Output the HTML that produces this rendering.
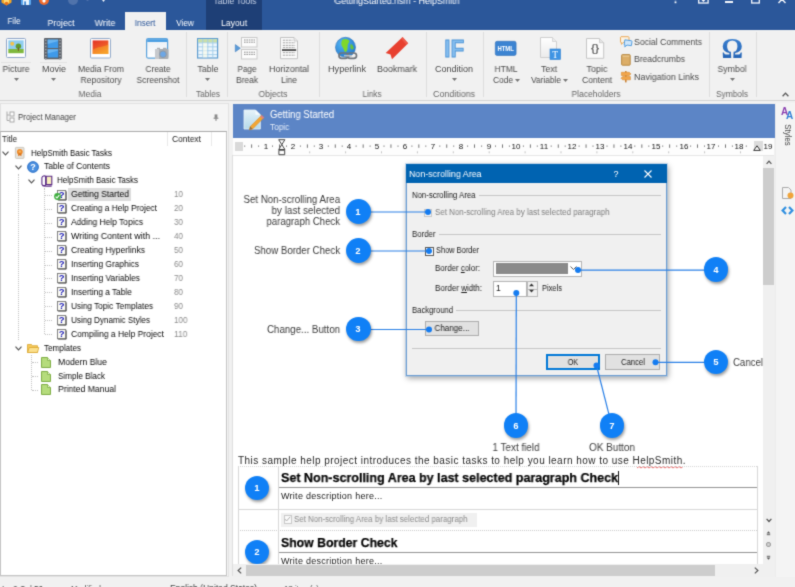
<!DOCTYPE html>
<html><head><meta charset="utf-8"><title>HelpSmith</title>
<style>
html,body{margin:0;padding:0;}
body{width:795px;height:587px;overflow:hidden;position:relative;background:#f1f1f1;font-family:"Liberation Sans",sans-serif;}
.t{position:absolute;white-space:nowrap;display:block;will-change:transform;}
svg{position:absolute;overflow:visible;}
#wrap{position:absolute;left:0;top:0;width:795px;height:587px;overflow:hidden;background:#f1f1f1;filter:url(#bl);}
</style></head><body><svg width="0" height="0" style="position:absolute"><filter id="bl" x="0" y="0" width="100%" height="100%" color-interpolation-filters="sRGB"><feConvolveMatrix order="3" kernelMatrix="0.025 0.095 0.025 0.095 0.52 0.095 0.025 0.095 0.025" edgeMode="duplicate" preserveAlpha="true"/></filter></svg><div id="wrap">
<div style="position:absolute;left:0px;top:0px;width:795px;height:30px;background:#2b579a;"></div><div style="position:absolute;left:206px;top:0px;width:56px;height:30px;background:#1e3f76;"></div><div style="position:absolute;left:125px;top:12px;width:41px;height:19px;background:#f1f1f1;"></div><span class="t" style="left:235px;transform-origin:50% 50%;top:-4.5px;line-height:11px;font-size:9px;color:#c9d4e8;font-weight:normal;font-family:'Liberation Sans', sans-serif;transform:translateX(-50%) scaleX(0.9582);">Table Tools</span><span class="t" style="left:396.5px;transform-origin:50% 50%;top:-4.5px;line-height:11px;font-size:9px;color:#ffffff;font-weight:normal;font-family:'Liberation Sans', sans-serif;transform:translateX(-50%) scaleX(0.9838);">GettingStarted.hsm - HelpSmith</span><span class="t" style="left:14.2px;transform-origin:50% 50%;top:15.45px;line-height:11.5px;font-size:9.5px;color:#fff;font-weight:normal;font-family:'Liberation Sans', sans-serif;transform:translateX(-50%) scaleX(0.8490);">File</span><span class="t" style="left:60.8px;transform-origin:50% 50%;top:16.85px;line-height:11.5px;font-size:9.5px;color:#fff;font-weight:normal;font-family:'Liberation Sans', sans-serif;transform:translateX(-50%) scaleX(0.9128);">Project</span><span class="t" style="left:104.7px;transform-origin:50% 50%;top:16.85px;line-height:11.5px;font-size:9.5px;color:#fff;font-weight:normal;font-family:'Liberation Sans', sans-serif;transform:translateX(-50%) scaleX(0.9409);">Write</span><span class="t" style="left:145.3px;transform-origin:50% 50%;top:16.85px;line-height:11.5px;font-size:9.5px;color:#2b579a;font-weight:normal;font-family:'Liberation Sans', sans-serif;transform:translateX(-50%) scaleX(0.8710);">Insert</span><span class="t" style="left:184.5px;transform-origin:50% 50%;top:16.85px;line-height:11.5px;font-size:9.5px;color:#fff;font-weight:normal;font-family:'Liberation Sans', sans-serif;transform:translateX(-50%) scaleX(0.8667);">View</span><span class="t" style="left:233.7px;transform-origin:50% 50%;top:16.85px;line-height:11.5px;font-size:9.5px;color:#fff;font-weight:normal;font-family:'Liberation Sans', sans-serif;transform:translateX(-50%) scaleX(0.9113);">Layout</span><div style="position:absolute;left:0px;top:30px;width:795px;height:71px;background:#f1f1f1;border-bottom:1px solid #d4d4d4;box-sizing:border-box;"></div><div style="position:absolute;left:186px;top:32px;width:1px;height:64.5px;background:#dddddd;"></div><div style="position:absolute;left:227px;top:32px;width:1px;height:64.5px;background:#dddddd;"></div><div style="position:absolute;left:318.5px;top:32px;width:1px;height:64.5px;background:#dddddd;"></div><div style="position:absolute;left:425.5px;top:32px;width:1px;height:64.5px;background:#dddddd;"></div><div style="position:absolute;left:482.5px;top:32px;width:1px;height:64.5px;background:#dddddd;"></div><div style="position:absolute;left:708.5px;top:32px;width:1px;height:64.5px;background:#dddddd;"></div><div style="position:absolute;left:756px;top:32px;width:1px;height:64.5px;background:#dddddd;"></div><span class="t" style="left:16px;transform-origin:50% 50%;top:64px;line-height:11px;font-size:9px;color:#4a4a4a;font-weight:normal;font-family:'Liberation Sans', sans-serif;transform:translateX(-50%) scaleX(0.9637);">Picture</span><svg style="left:13.5px;top:78px" width="5" height="3"><path d="M0 0h5L2.5 3z" fill="#777"/></svg><span class="t" style="left:53.5px;transform-origin:50% 50%;top:64px;line-height:11px;font-size:9px;color:#4a4a4a;font-weight:normal;font-family:'Liberation Sans', sans-serif;transform:translateX(-50%) scaleX(0.9993);">Movie</span><svg style="left:51px;top:78px" width="5" height="3"><path d="M0 0h5L2.5 3z" fill="#777"/></svg><span class="t" style="left:100.5px;transform-origin:50% 50%;top:64px;line-height:11px;font-size:9px;color:#4a4a4a;font-weight:normal;font-family:'Liberation Sans', sans-serif;transform:translateX(-50%) scaleX(0.9580);">Media From</span><span class="t" style="left:100.5px;transform-origin:50% 50%;top:75px;line-height:11px;font-size:9px;color:#4a4a4a;font-weight:normal;font-family:'Liberation Sans', sans-serif;transform:translateX(-50%) scaleX(0.9528);">Repository</span><span class="t" style="left:157.5px;transform-origin:50% 50%;top:64px;line-height:11px;font-size:9px;color:#4a4a4a;font-weight:normal;font-family:'Liberation Sans', sans-serif;transform:translateX(-50%) scaleX(0.9254);">Create</span><span class="t" style="left:157.5px;transform-origin:50% 50%;top:75px;line-height:11px;font-size:9px;color:#4a4a4a;font-weight:normal;font-family:'Liberation Sans', sans-serif;transform:translateX(-50%) scaleX(0.9444);">Screenshot</span><span class="t" style="left:90px;transform-origin:50% 50%;top:88.5px;line-height:11px;font-size:9px;color:#666;font-weight:normal;font-family:'Liberation Sans', sans-serif;transform:translateX(-50%) scaleX(0.9382);">Media</span><span class="t" style="left:207.5px;transform-origin:50% 50%;top:64px;line-height:11px;font-size:9px;color:#4a4a4a;font-weight:normal;font-family:'Liberation Sans', sans-serif;transform:translateX(-50%) scaleX(0.9760);">Table</span><svg style="left:205px;top:78px" width="5" height="3"><path d="M0 0h5L2.5 3z" fill="#777"/></svg><span class="t" style="left:207.5px;transform-origin:50% 50%;top:88.5px;line-height:11px;font-size:9px;color:#666;font-weight:normal;font-family:'Liberation Sans', sans-serif;transform:translateX(-50%) scaleX(0.9225);">Tables</span><span class="t" style="left:246.5px;transform-origin:50% 50%;top:64px;line-height:11px;font-size:9px;color:#4a4a4a;font-weight:normal;font-family:'Liberation Sans', sans-serif;transform:translateX(-50%) scaleX(0.9034);">Page</span><span class="t" style="left:246.5px;transform-origin:50% 50%;top:75px;line-height:11px;font-size:9px;color:#4a4a4a;font-weight:normal;font-family:'Liberation Sans', sans-serif;transform:translateX(-50%) scaleX(0.9355);">Break</span><span class="t" style="left:289px;transform-origin:50% 50%;top:64px;line-height:11px;font-size:9px;color:#4a4a4a;font-weight:normal;font-family:'Liberation Sans', sans-serif;transform:translateX(-50%) scaleX(0.9869);">Horizontal</span><span class="t" style="left:289px;transform-origin:50% 50%;top:75px;line-height:11px;font-size:9px;color:#4a4a4a;font-weight:normal;font-family:'Liberation Sans', sans-serif;transform:translateX(-50%) scaleX(0.9403);">Line</span><span class="t" style="left:272.5px;transform-origin:50% 50%;top:88.5px;line-height:11px;font-size:9px;color:#666;font-weight:normal;font-family:'Liberation Sans', sans-serif;transform:translateX(-50%) scaleX(0.9503);">Objects</span><span class="t" style="left:346.5px;transform-origin:50% 50%;top:64px;line-height:11px;font-size:9px;color:#4a4a4a;font-weight:normal;font-family:'Liberation Sans', sans-serif;transform:translateX(-50%) scaleX(1.0129);">Hyperlink</span><span class="t" style="left:397px;transform-origin:50% 50%;top:64px;line-height:11px;font-size:9px;color:#4a4a4a;font-weight:normal;font-family:'Liberation Sans', sans-serif;transform:translateX(-50%) scaleX(0.9873);">Bookmark</span><span class="t" style="left:372px;transform-origin:50% 50%;top:88.5px;line-height:11px;font-size:9px;color:#666;font-weight:normal;font-family:'Liberation Sans', sans-serif;transform:translateX(-50%) scaleX(0.9041);">Links</span><span class="t" style="left:454px;transform-origin:50% 50%;top:64px;line-height:11px;font-size:9px;color:#4a4a4a;font-weight:normal;font-family:'Liberation Sans', sans-serif;transform:translateX(-50%) scaleX(0.9992);">Condition</span><svg style="left:451.5px;top:78px" width="5" height="3"><path d="M0 0h5L2.5 3z" fill="#777"/></svg><span class="t" style="left:454px;transform-origin:50% 50%;top:88.5px;line-height:11px;font-size:9px;color:#666;font-weight:normal;font-family:'Liberation Sans', sans-serif;transform:translateX(-50%) scaleX(0.9875);">Conditions</span><span class="t" style="left:505.5px;transform-origin:50% 50%;top:64px;line-height:11px;font-size:9px;color:#4a4a4a;font-weight:normal;font-family:'Liberation Sans', sans-serif;transform:translateX(-50%) scaleX(0.9388);">HTML</span><span class="t" style="left:502.7px;transform-origin:50% 50%;top:75px;line-height:11px;font-size:9px;color:#4a4a4a;font-weight:normal;font-family:'Liberation Sans', sans-serif;transform:translateX(-50%) scaleX(0.9296);">Code</span><span class="t" style="left:549px;transform-origin:50% 50%;top:64px;line-height:11px;font-size:9px;color:#4a4a4a;font-weight:normal;font-family:'Liberation Sans', sans-serif;transform:translateX(-50%) scaleX(0.9688);">Text</span><span class="t" style="left:546.4px;transform-origin:50% 50%;top:75px;line-height:11px;font-size:9px;color:#4a4a4a;font-weight:normal;font-family:'Liberation Sans', sans-serif;transform:translateX(-50%) scaleX(0.9271);">Variable</span><span class="t" style="left:596.5px;transform-origin:50% 50%;top:64px;line-height:11px;font-size:9px;color:#4a4a4a;font-weight:normal;font-family:'Liberation Sans', sans-serif;transform:translateX(-50%) scaleX(0.9993);">Topic</span><span class="t" style="left:596.5px;transform-origin:50% 50%;top:75px;line-height:11px;font-size:9px;color:#4a4a4a;font-weight:normal;font-family:'Liberation Sans', sans-serif;transform:translateX(-50%) scaleX(0.9514);">Content</span><span class="t" style="left:595.5px;transform-origin:50% 50%;top:88.5px;line-height:11px;font-size:9px;color:#666;font-weight:normal;font-family:'Liberation Sans', sans-serif;transform:translateX(-50%) scaleX(0.9417);">Placeholders</span><span class="t" style="left:732px;transform-origin:50% 50%;top:64px;line-height:11px;font-size:9px;color:#4a4a4a;font-weight:normal;font-family:'Liberation Sans', sans-serif;transform:translateX(-50%) scaleX(0.9662);">Symbol</span><svg style="left:729.5px;top:78px" width="5" height="3"><path d="M0 0h5L2.5 3z" fill="#777"/></svg><span class="t" style="left:732px;transform-origin:50% 50%;top:88.5px;line-height:11px;font-size:9px;color:#666;font-weight:normal;font-family:'Liberation Sans', sans-serif;transform:translateX(-50%) scaleX(0.9271);">Symbols</span><span class="t" style="left:634px;transform-origin:0 50%;top:36.5px;line-height:11px;font-size:9px;color:#4a4a4a;font-weight:normal;font-family:'Liberation Sans', sans-serif;transform:scaleX(0.9641);">Social Comments</span><span class="t" style="left:634px;transform-origin:0 50%;top:54px;line-height:11px;font-size:9px;color:#4a4a4a;font-weight:normal;font-family:'Liberation Sans', sans-serif;transform:scaleX(0.9527);">Breadcrumbs</span><span class="t" style="left:634px;transform-origin:0 50%;top:72px;line-height:11px;font-size:9px;color:#4a4a4a;font-weight:normal;font-family:'Liberation Sans', sans-serif;transform:scaleX(0.9841);">Navigation Links</span><div style="position:absolute;left:0px;top:103px;width:229px;height:474px;background:#f5f5f5;border:1px solid #e2e2e2;box-sizing:border-box;"></div><span class="t" style="left:17.5px;transform-origin:0 50%;top:111.5px;line-height:11px;font-size:9px;color:#444;font-weight:normal;font-family:'Liberation Sans', sans-serif;transform:scaleX(0.8782);">Project Manager</span><div style="position:absolute;left:0px;top:131px;width:227px;height:445px;background:#fff;border:1px solid #c4c4c4;border-top-color:#ababab;box-sizing:border-box;"></div><div style="position:absolute;left:167px;top:132px;width:1px;height:14px;background:#e9e9e9;"></div><div style="position:absolute;left:211px;top:132px;width:1px;height:14px;background:#e9e9e9;"></div><span class="t" style="left:2px;transform-origin:0 50%;top:133.5px;line-height:11px;font-size:9px;color:#222;font-weight:normal;font-family:'Liberation Sans', sans-serif;transform:scaleX(0.8997);">Title</span><span class="t" style="left:172px;transform-origin:0 50%;top:133.5px;line-height:11px;font-size:9px;color:#222;font-weight:normal;font-family:'Liberation Sans', sans-serif;transform:scaleX(0.9345);">Context</span><div style="position:absolute;left:233px;top:104px;width:542px;height:34px;background:#5c85c6;"></div><span class="t" style="left:270px;transform-origin:0 50%;top:108.5px;line-height:12px;font-size:10px;color:#fff;font-weight:normal;font-family:'Liberation Sans', sans-serif;transform:scaleX(0.9515);">Getting Started</span><span class="t" style="left:270px;transform-origin:0 50%;top:121.95px;line-height:10.5px;font-size:8.5px;color:#e4ecf8;font-weight:normal;font-family:'Liberation Sans', sans-serif;transform:scaleX(0.9726);">Topic</span><div style="position:absolute;left:233px;top:138px;width:541px;height:17px;background:#f3f3f3;"></div><div style="position:absolute;left:233px;top:155px;width:531px;height:407px;background:#fff;"></div><div style="position:absolute;left:18px;top:174px;width:0px;height:166px;border-left:1px dotted #c2c2c2;"></div><div style="position:absolute;left:44px;top:188px;width:0px;height:146.22px;border-left:1px dotted #c2c2c2;"></div><div style="position:absolute;left:31px;top:355px;width:0px;height:34.98px;border-left:1px dotted #c2c2c2;"></div><div style="position:absolute;left:45px;top:194.82px;width:7px;height:0px;border-top:1px dotted #c2c2c2;"></div><div style="position:absolute;left:45px;top:208.76px;width:7px;height:0px;border-top:1px dotted #c2c2c2;"></div><div style="position:absolute;left:45px;top:222.7px;width:7px;height:0px;border-top:1px dotted #c2c2c2;"></div><div style="position:absolute;left:45px;top:236.64px;width:7px;height:0px;border-top:1px dotted #c2c2c2;"></div><div style="position:absolute;left:45px;top:250.58px;width:7px;height:0px;border-top:1px dotted #c2c2c2;"></div><div style="position:absolute;left:45px;top:264.52px;width:7px;height:0px;border-top:1px dotted #c2c2c2;"></div><div style="position:absolute;left:45px;top:278.46px;width:7px;height:0px;border-top:1px dotted #c2c2c2;"></div><div style="position:absolute;left:45px;top:292.4px;width:7px;height:0px;border-top:1px dotted #c2c2c2;"></div><div style="position:absolute;left:45px;top:306.34px;width:7px;height:0px;border-top:1px dotted #c2c2c2;"></div><div style="position:absolute;left:45px;top:320.28px;width:7px;height:0px;border-top:1px dotted #c2c2c2;"></div><div style="position:absolute;left:45px;top:334.22px;width:7px;height:0px;border-top:1px dotted #c2c2c2;"></div><div style="position:absolute;left:32px;top:362.1px;width:6px;height:0px;border-top:1px dotted #c2c2c2;"></div><div style="position:absolute;left:32px;top:376.04px;width:6px;height:0px;border-top:1px dotted #c2c2c2;"></div><div style="position:absolute;left:32px;top:389.98px;width:6px;height:0px;border-top:1px dotted #c2c2c2;"></div><div style="position:absolute;left:67.5px;top:187.5px;width:63.5px;height:13.5px;background:#dcdcdc;"></div><svg style="left:1.5px;top:150.8px" width="7" height="5"><path d="M0.5 0.7L3.5 3.8L6.5 0.7" fill="none" stroke="#555" stroke-width="1.2"/></svg><svg style="left:15px;top:164.74px" width="7" height="5"><path d="M0.5 0.7L3.5 3.8L6.5 0.7" fill="none" stroke="#555" stroke-width="1.2"/></svg><svg style="left:28px;top:178.68px" width="7" height="5"><path d="M0.5 0.7L3.5 3.8L6.5 0.7" fill="none" stroke="#555" stroke-width="1.2"/></svg><svg style="left:15px;top:345.96px" width="7" height="5"><path d="M0.5 0.7L3.5 3.8L6.5 0.7" fill="none" stroke="#555" stroke-width="1.2"/></svg><span class="t" style="left:30.5px;transform-origin:0 50%;top:147.5px;line-height:11px;font-size:9px;color:#0a0a0a;font-weight:normal;font-family:'Liberation Sans', sans-serif;transform:scaleX(0.8865);">HelpSmith Basic Tasks</span><span class="t" style="left:43.5px;transform-origin:0 50%;top:161.44px;line-height:11px;font-size:9px;color:#0a0a0a;font-weight:normal;font-family:'Liberation Sans', sans-serif;transform:scaleX(0.9422);">Table of Contents</span><span class="t" style="left:57px;transform-origin:0 50%;top:175.38px;line-height:11px;font-size:9px;color:#0a0a0a;font-weight:normal;font-family:'Liberation Sans', sans-serif;transform:scaleX(0.8865);">HelpSmith Basic Tasks</span><svg style="left:56.5px;top:189.52px" width="10" height="11" viewBox="0 0 10 11"><rect x="0.5" y="0.5" width="8.2" height="9.2" fill="#fdfdf6" stroke="#777" stroke-width="0.9"/><path d="M1.2 10.1H9.2V1.4" stroke="#444" stroke-width="0.9" fill="none"/><text x="4.6" y="8.3" font-size="9.5" font-weight="bold" font-family="Liberation Sans,sans-serif" fill="#2020b8" text-anchor="middle">?</text></svg><span class="t" style="left:70.5px;transform-origin:0 50%;top:189.32px;line-height:11px;font-size:9px;color:#0a0a0a;font-weight:normal;font-family:'Liberation Sans', sans-serif;transform:scaleX(0.9579);">Getting Started</span><span class="t" style="left:173.5px;transform-origin:0 50%;top:189.32px;line-height:11px;font-size:9px;color:#8a8a8a;font-weight:normal;font-family:'Liberation Sans', sans-serif;transform:scaleX(0.8986);">10</span><svg style="left:56.5px;top:203.46px" width="10" height="11" viewBox="0 0 10 11"><rect x="0.5" y="0.5" width="8.2" height="9.2" fill="#fdfdf6" stroke="#777" stroke-width="0.9"/><path d="M1.2 10.1H9.2V1.4" stroke="#444" stroke-width="0.9" fill="none"/><text x="4.6" y="8.3" font-size="9.5" font-weight="bold" font-family="Liberation Sans,sans-serif" fill="#2020b8" text-anchor="middle">?</text></svg><span class="t" style="left:70.5px;transform-origin:0 50%;top:203.26px;line-height:11px;font-size:9px;color:#0a0a0a;font-weight:normal;font-family:'Liberation Sans', sans-serif;transform:scaleX(0.9243);">Creating a Help Project</span><span class="t" style="left:173.5px;transform-origin:0 50%;top:203.26px;line-height:11px;font-size:9px;color:#8a8a8a;font-weight:normal;font-family:'Liberation Sans', sans-serif;transform:scaleX(0.8986);">20</span><svg style="left:56.5px;top:217.4px" width="10" height="11" viewBox="0 0 10 11"><rect x="0.5" y="0.5" width="8.2" height="9.2" fill="#fdfdf6" stroke="#777" stroke-width="0.9"/><path d="M1.2 10.1H9.2V1.4" stroke="#444" stroke-width="0.9" fill="none"/><text x="4.6" y="8.3" font-size="9.5" font-weight="bold" font-family="Liberation Sans,sans-serif" fill="#2020b8" text-anchor="middle">?</text></svg><span class="t" style="left:70.5px;transform-origin:0 50%;top:217.2px;line-height:11px;font-size:9px;color:#0a0a0a;font-weight:normal;font-family:'Liberation Sans', sans-serif;transform:scaleX(0.9364);">Adding Help Topics</span><span class="t" style="left:173.5px;transform-origin:0 50%;top:217.2px;line-height:11px;font-size:9px;color:#8a8a8a;font-weight:normal;font-family:'Liberation Sans', sans-serif;transform:scaleX(0.8986);">30</span><svg style="left:56.5px;top:231.34px" width="10" height="11" viewBox="0 0 10 11"><rect x="0.5" y="0.5" width="8.2" height="9.2" fill="#fdfdf6" stroke="#777" stroke-width="0.9"/><path d="M1.2 10.1H9.2V1.4" stroke="#444" stroke-width="0.9" fill="none"/><text x="4.6" y="8.3" font-size="9.5" font-weight="bold" font-family="Liberation Sans,sans-serif" fill="#2020b8" text-anchor="middle">?</text></svg><span class="t" style="left:70.5px;transform-origin:0 50%;top:231.14px;line-height:11px;font-size:9px;color:#0a0a0a;font-weight:normal;font-family:'Liberation Sans', sans-serif;transform:scaleX(0.9848);">Writing Content with ...</span><span class="t" style="left:173.5px;transform-origin:0 50%;top:231.14px;line-height:11px;font-size:9px;color:#8a8a8a;font-weight:normal;font-family:'Liberation Sans', sans-serif;transform:scaleX(0.8986);">40</span><svg style="left:56.5px;top:245.28px" width="10" height="11" viewBox="0 0 10 11"><rect x="0.5" y="0.5" width="8.2" height="9.2" fill="#fdfdf6" stroke="#777" stroke-width="0.9"/><path d="M1.2 10.1H9.2V1.4" stroke="#444" stroke-width="0.9" fill="none"/><text x="4.6" y="8.3" font-size="9.5" font-weight="bold" font-family="Liberation Sans,sans-serif" fill="#2020b8" text-anchor="middle">?</text></svg><span class="t" style="left:70.5px;transform-origin:0 50%;top:245.08px;line-height:11px;font-size:9px;color:#0a0a0a;font-weight:normal;font-family:'Liberation Sans', sans-serif;transform:scaleX(0.9423);">Creating Hyperlinks</span><span class="t" style="left:173.5px;transform-origin:0 50%;top:245.08px;line-height:11px;font-size:9px;color:#8a8a8a;font-weight:normal;font-family:'Liberation Sans', sans-serif;transform:scaleX(0.8986);">50</span><svg style="left:56.5px;top:259.22px" width="10" height="11" viewBox="0 0 10 11"><rect x="0.5" y="0.5" width="8.2" height="9.2" fill="#fdfdf6" stroke="#777" stroke-width="0.9"/><path d="M1.2 10.1H9.2V1.4" stroke="#444" stroke-width="0.9" fill="none"/><text x="4.6" y="8.3" font-size="9.5" font-weight="bold" font-family="Liberation Sans,sans-serif" fill="#2020b8" text-anchor="middle">?</text></svg><span class="t" style="left:70.5px;transform-origin:0 50%;top:259.02px;line-height:11px;font-size:9px;color:#0a0a0a;font-weight:normal;font-family:'Liberation Sans', sans-serif;transform:scaleX(0.9309);">Inserting Graphics</span><span class="t" style="left:173.5px;transform-origin:0 50%;top:259.02px;line-height:11px;font-size:9px;color:#8a8a8a;font-weight:normal;font-family:'Liberation Sans', sans-serif;transform:scaleX(0.8986);">60</span><svg style="left:56.5px;top:273.16px" width="10" height="11" viewBox="0 0 10 11"><rect x="0.5" y="0.5" width="8.2" height="9.2" fill="#fdfdf6" stroke="#777" stroke-width="0.9"/><path d="M1.2 10.1H9.2V1.4" stroke="#444" stroke-width="0.9" fill="none"/><text x="4.6" y="8.3" font-size="9.5" font-weight="bold" font-family="Liberation Sans,sans-serif" fill="#2020b8" text-anchor="middle">?</text></svg><span class="t" style="left:70.5px;transform-origin:0 50%;top:272.96px;line-height:11px;font-size:9px;color:#0a0a0a;font-weight:normal;font-family:'Liberation Sans', sans-serif;transform:scaleX(0.9340);">Inserting Variables</span><span class="t" style="left:173.5px;transform-origin:0 50%;top:272.96px;line-height:11px;font-size:9px;color:#8a8a8a;font-weight:normal;font-family:'Liberation Sans', sans-serif;transform:scaleX(0.8986);">70</span><svg style="left:56.5px;top:287.1px" width="10" height="11" viewBox="0 0 10 11"><rect x="0.5" y="0.5" width="8.2" height="9.2" fill="#fdfdf6" stroke="#777" stroke-width="0.9"/><path d="M1.2 10.1H9.2V1.4" stroke="#444" stroke-width="0.9" fill="none"/><text x="4.6" y="8.3" font-size="9.5" font-weight="bold" font-family="Liberation Sans,sans-serif" fill="#2020b8" text-anchor="middle">?</text></svg><span class="t" style="left:70.5px;transform-origin:0 50%;top:286.9px;line-height:11px;font-size:9px;color:#0a0a0a;font-weight:normal;font-family:'Liberation Sans', sans-serif;transform:scaleX(0.9258);">Inserting a Table</span><span class="t" style="left:173.5px;transform-origin:0 50%;top:286.9px;line-height:11px;font-size:9px;color:#8a8a8a;font-weight:normal;font-family:'Liberation Sans', sans-serif;transform:scaleX(0.8986);">80</span><svg style="left:56.5px;top:301.04px" width="10" height="11" viewBox="0 0 10 11"><rect x="0.5" y="0.5" width="8.2" height="9.2" fill="#fdfdf6" stroke="#777" stroke-width="0.9"/><path d="M1.2 10.1H9.2V1.4" stroke="#444" stroke-width="0.9" fill="none"/><text x="4.6" y="8.3" font-size="9.5" font-weight="bold" font-family="Liberation Sans,sans-serif" fill="#2020b8" text-anchor="middle">?</text></svg><span class="t" style="left:70.5px;transform-origin:0 50%;top:300.84px;line-height:11px;font-size:9px;color:#0a0a0a;font-weight:normal;font-family:'Liberation Sans', sans-serif;transform:scaleX(0.9140);">Using Topic Templates</span><span class="t" style="left:173.5px;transform-origin:0 50%;top:300.84px;line-height:11px;font-size:9px;color:#8a8a8a;font-weight:normal;font-family:'Liberation Sans', sans-serif;transform:scaleX(0.8986);">90</span><svg style="left:56.5px;top:314.98px" width="10" height="11" viewBox="0 0 10 11"><rect x="0.5" y="0.5" width="8.2" height="9.2" fill="#fdfdf6" stroke="#777" stroke-width="0.9"/><path d="M1.2 10.1H9.2V1.4" stroke="#444" stroke-width="0.9" fill="none"/><text x="4.6" y="8.3" font-size="9.5" font-weight="bold" font-family="Liberation Sans,sans-serif" fill="#2020b8" text-anchor="middle">?</text></svg><span class="t" style="left:70.5px;transform-origin:0 50%;top:314.78px;line-height:11px;font-size:9px;color:#0a0a0a;font-weight:normal;font-family:'Liberation Sans', sans-serif;transform:scaleX(0.9025);">Using Dynamic Styles</span><span class="t" style="left:173.5px;transform-origin:0 50%;top:314.78px;line-height:11px;font-size:9px;color:#8a8a8a;font-weight:normal;font-family:'Liberation Sans', sans-serif;transform:scaleX(0.8981);">100</span><svg style="left:56.5px;top:328.92px" width="10" height="11" viewBox="0 0 10 11"><rect x="0.5" y="0.5" width="8.2" height="9.2" fill="#fdfdf6" stroke="#777" stroke-width="0.9"/><path d="M1.2 10.1H9.2V1.4" stroke="#444" stroke-width="0.9" fill="none"/><text x="4.6" y="8.3" font-size="9.5" font-weight="bold" font-family="Liberation Sans,sans-serif" fill="#2020b8" text-anchor="middle">?</text></svg><span class="t" style="left:70.5px;transform-origin:0 50%;top:328.72px;line-height:11px;font-size:9px;color:#0a0a0a;font-weight:normal;font-family:'Liberation Sans', sans-serif;transform:scaleX(0.9389);">Compiling a Help Project</span><span class="t" style="left:173.5px;transform-origin:0 50%;top:328.72px;line-height:11px;font-size:9px;color:#8a8a8a;font-weight:normal;font-family:'Liberation Sans', sans-serif;transform:scaleX(0.9402);">110</span><svg style="left:53.6px;top:192.6px" width="7" height="7" viewBox="0 0 7 7"><circle cx="3.5" cy="3.5" r="3.4" fill="#3fae3f"/><path d="M1.6 3.7L3 5L5.3 2.2" stroke="#fff" stroke-width="1.1" fill="none"/></svg><span class="t" style="left:43.5px;transform-origin:0 50%;top:342.66px;line-height:11px;font-size:9px;color:#0a0a0a;font-weight:normal;font-family:'Liberation Sans', sans-serif;transform:scaleX(0.9018);">Templates</span><svg style="left:41px;top:356.6px" width="10" height="11" viewBox="0 0 10 11"><path d="M0.5 0.5H6.5L9.5 3.5V10.5H0.5Z" fill="#b5dc7c" stroke="#7fae45" stroke-width="1"/><path d="M6.5 0.5V3.5H9.5" fill="#e4f3cc" stroke="#7fae45" stroke-width="0.8"/></svg><span class="t" style="left:57.5px;transform-origin:0 50%;top:356.6px;line-height:11px;font-size:9px;color:#0a0a0a;font-weight:normal;font-family:'Liberation Sans', sans-serif;transform:scaleX(0.9602);">Modern Blue</span><svg style="left:41px;top:370.54px" width="10" height="11" viewBox="0 0 10 11"><path d="M0.5 0.5H6.5L9.5 3.5V10.5H0.5Z" fill="#b5dc7c" stroke="#7fae45" stroke-width="1"/><path d="M6.5 0.5V3.5H9.5" fill="#e4f3cc" stroke="#7fae45" stroke-width="0.8"/></svg><span class="t" style="left:57.5px;transform-origin:0 50%;top:370.54px;line-height:11px;font-size:9px;color:#0a0a0a;font-weight:normal;font-family:'Liberation Sans', sans-serif;transform:scaleX(0.9033);">Simple Black</span><svg style="left:41px;top:384.48px" width="10" height="11" viewBox="0 0 10 11"><path d="M0.5 0.5H6.5L9.5 3.5V10.5H0.5Z" fill="#b5dc7c" stroke="#7fae45" stroke-width="1"/><path d="M6.5 0.5V3.5H9.5" fill="#e4f3cc" stroke="#7fae45" stroke-width="0.8"/></svg><span class="t" style="left:57.5px;transform-origin:0 50%;top:384.48px;line-height:11px;font-size:9px;color:#0a0a0a;font-weight:normal;font-family:'Liberation Sans', sans-serif;transform:scaleX(0.9579);">Printed Manual</span><svg style="left:15.3px;top:146.8px" width="10" height="12" viewBox="0 0 10 12"><rect x="0.4" y="0.4" width="8.6" height="11" rx="0.8" fill="#e6e3dc" stroke="#c4c0b6" stroke-width="0.8"/><circle cx="4.8" cy="4.8" r="2.9" fill="#ee8a2a"/><path d="M3.2 6.5H6.4V9.3L4.8 8.3L3.2 9.3Z" fill="#d9721a"/><circle cx="4.8" cy="4.6" r="1.2" fill="#f6b25c"/></svg><svg style="left:27px;top:160.94px" width="12" height="12" viewBox="0 0 12 12"><circle cx="6" cy="6" r="5.8" fill="#4a8fe0"/><circle cx="6" cy="6" r="5.3" fill="none" stroke="#2f6fc2" stroke-width="0.8"/><text x="6" y="9.3" font-size="9" font-weight="bold" font-family="Liberation Sans,sans-serif" fill="#fff" text-anchor="middle">?</text></svg><svg style="left:41px;top:174.88px" width="12" height="12" viewBox="0 0 12 12"><path d="M5.2 1.3H10.8V9.6H5.2Z" fill="#f8efbd" stroke="#5a2a84" stroke-width="1.1"/><path d="M4.6 1.2C3.4 0.5 1.4 0.9 0.9 2.6V9.2C1.6 10.8 3.4 10.9 4.6 10.2Z" fill="#fff" stroke="#5a2a84" stroke-width="1.1"/><path d="M1.2 10.6C3 11.6 7 11.2 10.8 11" stroke="#5a2a84" stroke-width="1.1" fill="none"/></svg><svg style="left:27px;top:343.16px" width="12" height="10" viewBox="0 0 12 10"><path d="M0.5 1.5H4.5L5.5 2.7H10.5V9.5H0.5Z" fill="#f6c95a" stroke="#d9a62e" stroke-width="0.8"/><path d="M0.5 9.5L2.3 4.5H11.8L10.5 9.5Z" fill="#fbdf8c" stroke="#d9a62e" stroke-width="0.8"/></svg><svg style="left:5px;top:111px" width="10" height="12" viewBox="0 0 10 12"><path d="M2 0.5V9.5H4.5M2 4H4.5" stroke="#aaa" fill="none"/><rect x="5" y="1" width="4" height="4" fill="#fff" stroke="#aaa"/><rect x="5" y="7" width="4" height="4" fill="#fff" stroke="#aaa"/></svg><svg style="left:212.5px;top:113.6px" width="6" height="8" viewBox="0 0 6 8"><path d="M1.6 0.4H4.4V3.8H1.6Z" fill="#8a8a8a"/><path d="M0.6 4.2H5.4M3 4.5V6.8" stroke="#6a6a6a" stroke-width="0.9" fill="none"/></svg><svg style="left:243px;top:109px" width="24" height="22" viewBox="0 0 24 22"><defs><linearGradient id="gt" x1="0" y1="0" x2="0" y2="1"><stop offset="0" stop-color="#e6f3f9"/><stop offset="1" stop-color="#b4d9ea"/></linearGradient></defs><path d="M1 1H12.5L17.3 5.8V20H1Z" fill="url(#gt)" stroke="#e9f4fa" stroke-width="0.8"/><path d="M12.5 1V5.8H17.3Z" fill="#f7fbfd"/><path d="M7.2 17.6L18.6 6.3L21 8.6L9.6 20L6.4 20.8Z" fill="#f2a633" stroke="#d98a22" stroke-width="0.5"/><path d="M18.6 6.3L21 8.6L19.9 9.7L17.5 7.4Z" fill="#d77a9a"/><path d="M6.4 20.8L7.2 17.6L9.6 20Z" fill="#8a6a48"/></svg><div style="position:absolute;left:233px;top:138px;width:541px;height:17.5px;background:#fdfdfd;border-bottom:1px solid #e6e6e6;box-sizing:border-box;"></div><div style="position:absolute;left:234.5px;top:141.5px;width:8px;height:9px;background:#d9d9d9;"></div><div style="position:absolute;left:753.5px;top:141px;width:9.5px;height:10px;background:#dcdcdc;"></div><svg style="left:233px;top:138px" width="541" height="18"><rect x="11.2" y="7.6" width="1" height="1" fill="#555"/><rect x="25.1" y="7.6" width="1" height="1" fill="#555"/><rect x="18.2" y="6.4" width="0.9" height="3.4" fill="#666"/><rect x="39.0" y="7.6" width="1" height="1" fill="#555"/><rect x="53.0" y="7.6" width="1" height="1" fill="#555"/><rect x="46.1" y="6.4" width="0.9" height="3.4" fill="#666"/><rect x="66.9" y="7.6" width="1" height="1" fill="#555"/><rect x="80.8" y="7.6" width="1" height="1" fill="#555"/><rect x="73.9" y="6.4" width="0.9" height="3.4" fill="#666"/><rect x="94.8" y="7.6" width="1" height="1" fill="#555"/><rect x="108.7" y="7.6" width="1" height="1" fill="#555"/><rect x="101.8" y="6.4" width="0.9" height="3.4" fill="#666"/><rect x="122.6" y="7.6" width="1" height="1" fill="#555"/><rect x="136.6" y="7.6" width="1" height="1" fill="#555"/><rect x="129.7" y="6.4" width="0.9" height="3.4" fill="#666"/><rect x="150.5" y="7.6" width="1" height="1" fill="#555"/><rect x="164.5" y="7.6" width="1" height="1" fill="#555"/><rect x="157.5" y="6.4" width="0.9" height="3.4" fill="#666"/><rect x="178.4" y="7.6" width="1" height="1" fill="#555"/><rect x="192.3" y="7.6" width="1" height="1" fill="#555"/><rect x="185.4" y="6.4" width="0.9" height="3.4" fill="#666"/><rect x="206.3" y="7.6" width="1" height="1" fill="#555"/><rect x="220.2" y="7.6" width="1" height="1" fill="#555"/><rect x="213.3" y="6.4" width="0.9" height="3.4" fill="#666"/><rect x="234.1" y="7.6" width="1" height="1" fill="#555"/><rect x="248.1" y="7.6" width="1" height="1" fill="#555"/><rect x="241.1" y="6.4" width="0.9" height="3.4" fill="#666"/><rect x="262.0" y="7.6" width="1" height="1" fill="#555"/><rect x="275.9" y="7.6" width="1" height="1" fill="#555"/><rect x="269.0" y="6.4" width="0.9" height="3.4" fill="#666"/><rect x="289.9" y="7.6" width="1" height="1" fill="#555"/><rect x="303.8" y="7.6" width="1" height="1" fill="#555"/><rect x="296.9" y="6.4" width="0.9" height="3.4" fill="#666"/><rect x="317.7" y="7.6" width="1" height="1" fill="#555"/><rect x="331.7" y="7.6" width="1" height="1" fill="#555"/><rect x="324.8" y="6.4" width="0.9" height="3.4" fill="#666"/><rect x="345.6" y="7.6" width="1" height="1" fill="#555"/><rect x="359.5" y="7.6" width="1" height="1" fill="#555"/><rect x="352.6" y="6.4" width="0.9" height="3.4" fill="#666"/><rect x="373.5" y="7.6" width="1" height="1" fill="#555"/><rect x="387.4" y="7.6" width="1" height="1" fill="#555"/><rect x="380.5" y="6.4" width="0.9" height="3.4" fill="#666"/><rect x="401.3" y="7.6" width="1" height="1" fill="#555"/><rect x="415.3" y="7.6" width="1" height="1" fill="#555"/><rect x="408.4" y="6.4" width="0.9" height="3.4" fill="#666"/><rect x="429.2" y="7.6" width="1" height="1" fill="#555"/><rect x="443.2" y="7.6" width="1" height="1" fill="#555"/><rect x="436.2" y="6.4" width="0.9" height="3.4" fill="#666"/><rect x="457.1" y="7.6" width="1" height="1" fill="#555"/><rect x="471.0" y="7.6" width="1" height="1" fill="#555"/><rect x="464.1" y="6.4" width="0.9" height="3.4" fill="#666"/><rect x="485.0" y="7.6" width="1" height="1" fill="#555"/><rect x="498.9" y="7.6" width="1" height="1" fill="#555"/><rect x="492.0" y="6.4" width="0.9" height="3.4" fill="#666"/><rect x="512.8" y="7.6" width="1" height="1" fill="#555"/><rect x="76.2" y="13.3" width="1" height="2" fill="#c4c4c4"/><rect x="112.1" y="13.3" width="1" height="2" fill="#c4c4c4"/><rect x="148.0" y="13.3" width="1" height="2" fill="#c4c4c4"/><rect x="183.9" y="13.3" width="1" height="2" fill="#c4c4c4"/><rect x="219.8" y="13.3" width="1" height="2" fill="#c4c4c4"/><rect x="255.7" y="13.3" width="1" height="2" fill="#c4c4c4"/><rect x="291.6" y="13.3" width="1" height="2" fill="#c4c4c4"/><rect x="327.5" y="13.3" width="1" height="2" fill="#c4c4c4"/><rect x="363.4" y="13.3" width="1" height="2" fill="#c4c4c4"/><rect x="399.3" y="13.3" width="1" height="2" fill="#c4c4c4"/><rect x="435.2" y="13.3" width="1" height="2" fill="#c4c4c4"/><rect x="471.1" y="13.3" width="1" height="2" fill="#c4c4c4"/><rect x="507.0" y="13.3" width="1" height="2" fill="#c4c4c4"/></svg><span class="t" style="left:265.57px;transform-origin:50% 50%;top:141.6px;line-height:10px;font-size:8px;color:#151515;font-weight:normal;font-family:'Liberation Sans', sans-serif;transform:translateX(-50%) scaleX(1.0000);">1</span><span class="t" style="left:293.44px;transform-origin:50% 50%;top:141.6px;line-height:10px;font-size:8px;color:#151515;font-weight:normal;font-family:'Liberation Sans', sans-serif;transform:translateX(-50%) scaleX(1.0000);">2</span><span class="t" style="left:321.31px;transform-origin:50% 50%;top:141.6px;line-height:10px;font-size:8px;color:#151515;font-weight:normal;font-family:'Liberation Sans', sans-serif;transform:translateX(-50%) scaleX(1.0000);">3</span><span class="t" style="left:349.18px;transform-origin:50% 50%;top:141.6px;line-height:10px;font-size:8px;color:#151515;font-weight:normal;font-family:'Liberation Sans', sans-serif;transform:translateX(-50%) scaleX(1.0000);">4</span><span class="t" style="left:377.05px;transform-origin:50% 50%;top:141.6px;line-height:10px;font-size:8px;color:#151515;font-weight:normal;font-family:'Liberation Sans', sans-serif;transform:translateX(-50%) scaleX(1.0000);">5</span><span class="t" style="left:404.92px;transform-origin:50% 50%;top:141.6px;line-height:10px;font-size:8px;color:#151515;font-weight:normal;font-family:'Liberation Sans', sans-serif;transform:translateX(-50%) scaleX(1.0000);">6</span><span class="t" style="left:432.79px;transform-origin:50% 50%;top:141.6px;line-height:10px;font-size:8px;color:#151515;font-weight:normal;font-family:'Liberation Sans', sans-serif;transform:translateX(-50%) scaleX(1.0000);">7</span><span class="t" style="left:460.66px;transform-origin:50% 50%;top:141.6px;line-height:10px;font-size:8px;color:#151515;font-weight:normal;font-family:'Liberation Sans', sans-serif;transform:translateX(-50%) scaleX(1.0000);">8</span><span class="t" style="left:488.53px;transform-origin:50% 50%;top:141.6px;line-height:10px;font-size:8px;color:#151515;font-weight:normal;font-family:'Liberation Sans', sans-serif;transform:translateX(-50%) scaleX(1.0000);">9</span><span class="t" style="left:516.4px;transform-origin:50% 50%;top:141.6px;line-height:10px;font-size:8px;color:#151515;font-weight:normal;font-family:'Liberation Sans', sans-serif;transform:translateX(-50%) scaleX(1.0000);">10</span><span class="t" style="left:544.27px;transform-origin:50% 50%;top:141.6px;line-height:10px;font-size:8px;color:#151515;font-weight:normal;font-family:'Liberation Sans', sans-serif;transform:translateX(-50%) scaleX(1.0000);">11</span><span class="t" style="left:572.14px;transform-origin:50% 50%;top:141.6px;line-height:10px;font-size:8px;color:#151515;font-weight:normal;font-family:'Liberation Sans', sans-serif;transform:translateX(-50%) scaleX(1.0000);">12</span><span class="t" style="left:600.01px;transform-origin:50% 50%;top:141.6px;line-height:10px;font-size:8px;color:#151515;font-weight:normal;font-family:'Liberation Sans', sans-serif;transform:translateX(-50%) scaleX(1.0000);">13</span><span class="t" style="left:627.88px;transform-origin:50% 50%;top:141.6px;line-height:10px;font-size:8px;color:#151515;font-weight:normal;font-family:'Liberation Sans', sans-serif;transform:translateX(-50%) scaleX(1.0000);">14</span><span class="t" style="left:655.75px;transform-origin:50% 50%;top:141.6px;line-height:10px;font-size:8px;color:#151515;font-weight:normal;font-family:'Liberation Sans', sans-serif;transform:translateX(-50%) scaleX(1.0000);">15</span><span class="t" style="left:683.62px;transform-origin:50% 50%;top:141.6px;line-height:10px;font-size:8px;color:#151515;font-weight:normal;font-family:'Liberation Sans', sans-serif;transform:translateX(-50%) scaleX(1.0000);">16</span><span class="t" style="left:711.49px;transform-origin:50% 50%;top:141.6px;line-height:10px;font-size:8px;color:#151515;font-weight:normal;font-family:'Liberation Sans', sans-serif;transform:translateX(-50%) scaleX(1.0000);">17</span><span class="t" style="left:739.36px;transform-origin:50% 50%;top:141.6px;line-height:10px;font-size:8px;color:#151515;font-weight:normal;font-family:'Liberation Sans', sans-serif;transform:translateX(-50%) scaleX(1.0000);">18</span><span class="t" style="left:768px;transform-origin:50% 50%;top:141.8px;line-height:10px;font-size:8px;color:#151515;font-weight:normal;font-family:'Liberation Sans', sans-serif;transform:translateX(-50%) scaleX(1.0000);">19</span><svg style="left:278px;top:139px" width="8" height="17" viewBox="0 0 8 17"><path d="M0.7 0.7H6.9L3.8 5.6Z M3.8 5.6L6.9 10.5H0.7Z M0.9 11.2H6.7V15.7H0.9Z" fill="#fff" stroke="#444" stroke-width="1"/></svg><svg style="left:753px;top:144.5px" width="8" height="6" viewBox="0 0 8 6"><path d="M0.7 5.4L4 0.8L7.3 5.4Z" fill="#fff" stroke="#333" stroke-width="1"/></svg><div style="position:absolute;left:232px;top:155px;width:1px;height:421px;background:#dedede;"></div><div style="position:absolute;left:233px;top:155.5px;width:530px;height:408px;background:#fff;overflow:hidden;"><span class="t" style="left:107px;transform-origin:100% 50%;top:37.05px;line-height:12.5px;font-size:10.5px;color:#3a3a3a;font-weight:normal;font-family:'Liberation Sans', sans-serif;transform:translateX(-100%) scaleX(0.9237);">Set Non-scrolling Area</span><span class="t" style="left:107px;transform-origin:100% 50%;top:48.55px;line-height:12.5px;font-size:10.5px;color:#3a3a3a;font-weight:normal;font-family:'Liberation Sans', sans-serif;transform:translateX(-100%) scaleX(0.9465);">by last selected</span><span class="t" style="left:107px;transform-origin:100% 50%;top:59.85px;line-height:12.5px;font-size:10.5px;color:#3a3a3a;font-weight:normal;font-family:'Liberation Sans', sans-serif;transform:translateX(-100%) scaleX(0.9123);">paragraph Check</span><span class="t" style="left:107px;transform-origin:100% 50%;top:88.65px;line-height:12.5px;font-size:10.5px;color:#3a3a3a;font-weight:normal;font-family:'Liberation Sans', sans-serif;transform:translateX(-100%) scaleX(0.9209);">Show Border Check</span><span class="t" style="left:107px;transform-origin:100% 50%;top:167.25px;line-height:12.5px;font-size:10.5px;color:#3a3a3a;font-weight:normal;font-family:'Liberation Sans', sans-serif;transform:translateX(-100%) scaleX(0.9262);">Change... Button</span><span class="t" style="left:500px;transform-origin:0 50%;top:200.25px;line-height:12.5px;font-size:10.5px;color:#3a3a3a;font-weight:normal;font-family:'Liberation Sans', sans-serif;transform:scaleX(0.9178);">Cancel</span><span class="t" style="left:282.7px;transform-origin:50% 50%;top:285.65px;line-height:12.5px;font-size:10.5px;color:#3a3a3a;font-weight:normal;font-family:'Liberation Sans', sans-serif;transform:translateX(-50%) scaleX(0.9397);">1 Text field</span><span class="t" style="left:379px;transform-origin:50% 50%;top:285.85px;line-height:12.5px;font-size:10.5px;color:#3a3a3a;font-weight:normal;font-family:'Liberation Sans', sans-serif;transform:translateX(-50%) scaleX(0.9494);">OK Button</span><div style="position:absolute;left:172.5px;top:8.5px;width:261px;height:212px;background:#f0f0f0;border:1px solid #6a9cd2;box-sizing:border-box;box-shadow:0 0 0 1px rgba(150,190,230,0.45),1px 2px 6px rgba(0,0,0,0.4);"><div style="position:absolute;left:-1px;top:-1px;width:261px;height:18.6px;background:#0063b1;"></div><span class="t" style="left:2.5px;transform-origin:0 50%;top:3.25px;line-height:11.5px;font-size:9.5px;color:#fff;font-weight:normal;font-family:'Liberation Sans', sans-serif;transform:scaleX(0.9340);">Non-scrolling Area</span><span class="t" style="left:209.1px;transform-origin:50% 50%;top:3.5px;line-height:11px;font-size:9px;color:#fff;font-weight:normal;font-family:'Liberation Sans', sans-serif;transform:translateX(-50%) scaleX(1.0000);">?</span><svg style="left:237.8px;top:5px" width="8" height="8"><path d="M0.5 0.5L7.5 7.5M7.5 0.5L0.5 7.5" stroke="#fff" stroke-width="1.1"/></svg><span class="t" style="left:5.1px;transform-origin:0 50%;top:24.95px;line-height:10.5px;font-size:8.5px;color:#1a1a1a;font-weight:normal;font-family:'Liberation Sans', sans-serif;transform:scaleX(0.9143);">Non-scrolling Area</span><div style="position:absolute;left:72.5px;top:29.5px;width:181.6px;height:1px;background:#c6c6c6;"></div><div style="position:absolute;left:17.5px;top:44px;width:8px;height:8px;background:#f4f4f4;border:1px solid #c8c8c8;box-sizing:border-box;"></div><span class="t" style="left:28.5px;transform-origin:0 50%;top:41.75px;line-height:10.5px;font-size:8.5px;color:#7e7e7e;font-weight:normal;font-family:'Liberation Sans', sans-serif;transform:scaleX(0.9350);">Set Non-scrolling Area by last selected paragraph</span><span class="t" style="left:5.1px;transform-origin:0 50%;top:64.45px;line-height:10.5px;font-size:8.5px;color:#1a1a1a;font-weight:normal;font-family:'Liberation Sans', sans-serif;transform:scaleX(0.9210);">Border</span><div style="position:absolute;left:32.2px;top:69px;width:221.9px;height:1px;background:#c6c6c6;"></div><div style="position:absolute;left:18.5px;top:81.5px;width:9px;height:9px;background:#fff;border:1px solid #5a5a5a;box-sizing:border-box;"></div><span class="t" style="left:29.8px;transform-origin:0 50%;top:80.25px;line-height:10.5px;font-size:8.5px;color:#1a1a1a;font-weight:normal;font-family:'Liberation Sans', sans-serif;transform:scaleX(0.8750);">Show Border</span><span class="t" style="left:28.5px;transform-origin:0 50%;top:98.05px;line-height:10.5px;font-size:8.5px;color:#1a1a1a;font-weight:normal;font-family:'Liberation Sans', sans-serif;transform:scaleX(0.9246);">Border <u>c</u>olor:</span><div style="position:absolute;left:86.8px;top:95.5px;width:88.5px;height:16px;background:#fff;border:1px solid #b4b4b4;box-sizing:border-box;"></div><div style="position:absolute;left:89.5px;top:98px;width:71.5px;height:11px;background:#8a8a8a;"></div><svg style="left:163px;top:101px" width="7" height="4"><path d="M0.5 0.5L3.5 3.5L6.5 0.5" stroke="#555" fill="none"/></svg><span class="t" style="left:28.5px;transform-origin:0 50%;top:117.75px;line-height:10.5px;font-size:8.5px;color:#1a1a1a;font-weight:normal;font-family:'Liberation Sans', sans-serif;transform:scaleX(0.9382);">Border <u>w</u>idth:</span><div style="position:absolute;left:86.8px;top:116px;width:33.5px;height:16px;background:#fff;border:1px solid #b4b4b4;box-sizing:border-box;"></div><span class="t" style="left:89.8px;transform-origin:0 50%;top:118.05px;line-height:10.5px;font-size:8.5px;color:#1a1a1a;font-weight:normal;font-family:'Liberation Sans', sans-serif;">1</span><div style="position:absolute;left:120.8px;top:116px;width:10.5px;height:16px;background:#f0f0f0;border:1px solid #b9b9b9;box-sizing:border-box;"></div><div style="position:absolute;left:120.8px;top:123.7px;width:10.5px;height:1px;background:#b9b9b9;"></div><svg style="left:122.5px;top:118px" width="5" height="10"><path d="M0 3.2L2.5 0.6L5 3.2Z M0 6.8L2.5 9.4L5 6.8Z" fill="#333"/></svg><span class="t" style="left:135.1px;transform-origin:0 50%;top:117.75px;line-height:10.5px;font-size:8.5px;color:#1a1a1a;font-weight:normal;font-family:'Liberation Sans', sans-serif;transform:scaleX(0.8815);">Pixels</span><span class="t" style="left:5.1px;transform-origin:0 50%;top:140.15px;line-height:10.5px;font-size:8.5px;color:#1a1a1a;font-weight:normal;font-family:'Liberation Sans', sans-serif;transform:scaleX(0.9036);">Background</span><div style="position:absolute;left:49.5px;top:144.5px;width:204.6px;height:1px;background:#c6c6c6;"></div><div style="position:absolute;left:18.2px;top:155.6px;width:54px;height:15.5px;background:#e1e1e1;border:1px solid #adadad;box-sizing:border-box;"></div><span class="t" style="left:45.2px;transform-origin:50% 50%;top:158.1px;line-height:10.5px;font-size:8.5px;color:#1a1a1a;font-weight:normal;font-family:'Liberation Sans', sans-serif;transform:translateX(-50%) scaleX(0.9492);">Change...</span><div style="position:absolute;left:5.1px;top:182.5px;width:249px;height:1px;background:#c6c6c6;"></div><div style="position:absolute;left:139.5px;top:189px;width:54px;height:15.5px;background:#e1e1e1;border:2px solid #0078d7;box-sizing:border-box;"></div><span class="t" style="left:166.5px;transform-origin:50% 50%;top:191.5px;line-height:10.5px;font-size:8.5px;color:#1a1a1a;font-weight:normal;font-family:'Liberation Sans', sans-serif;transform:translateX(-50%) scaleX(0.8550);">OK</span><div style="position:absolute;left:198.9px;top:189px;width:54.5px;height:15.5px;background:#e1e1e1;border:1px solid #adadad;box-sizing:border-box;"></div><span class="t" style="left:226.15px;transform-origin:50% 50%;top:191.5px;line-height:10.5px;font-size:8.5px;color:#1a1a1a;font-weight:normal;font-family:'Liberation Sans', sans-serif;transform:translateX(-50%) scaleX(0.9067);">Cancel</span></div><svg style="left:0;top:0" width="530" height="408"><line x1="125" y1="56" x2="195" y2="56" stroke="#2a80e6" stroke-width="1.2"/><circle cx="195" cy="56" r="3" fill="#157cf0"/><line x1="125" y1="95" x2="196" y2="95" stroke="#2a80e6" stroke-width="1.2"/><circle cx="196" cy="95" r="3" fill="#157cf0"/><line x1="125" y1="173.5" x2="196" y2="173.5" stroke="#2a80e6" stroke-width="1.2"/><circle cx="196" cy="173.5" r="3" fill="#157cf0"/><line x1="482.8" y1="114.1" x2="345" y2="114.1" stroke="#2a80e6" stroke-width="1.2"/><circle cx="345" cy="114.1" r="3" fill="#157cf0"/><line x1="482.8" y1="206.3" x2="422.5" y2="206.3" stroke="#2a80e6" stroke-width="1.2"/><circle cx="422.5" cy="206.3" r="3" fill="#157cf0"/><line x1="283" y1="270.3" x2="283.3" y2="136.9" stroke="#2a80e6" stroke-width="1.2"/><circle cx="283.3" cy="136.9" r="3" fill="#157cf0"/><line x1="379" y1="270.3" x2="363.5" y2="209.5" stroke="#2a80e6" stroke-width="1.2"/><circle cx="363.5" cy="209.5" r="3" fill="#157cf0"/></svg><div style="position:absolute;left:113px;top:43.8px;width:24.8px;height:24.8px;border-radius:50%;background:#1080f6;box-shadow:1px 2px 3px rgba(0,0,0,0.38);"></div><span class="t" style="left:125.4px;transform-origin:50% 50%;top:50.55px;line-height:11.5px;font-size:9.5px;color:#fff;font-weight:bold;font-family:'Liberation Sans', sans-serif;transform:translateX(-50%) scaleX(1.0000);">1</span><div style="position:absolute;left:113px;top:82.5px;width:24.8px;height:24.8px;border-radius:50%;background:#1080f6;box-shadow:1px 2px 3px rgba(0,0,0,0.38);"></div><span class="t" style="left:125.4px;transform-origin:50% 50%;top:89.25px;line-height:11.5px;font-size:9.5px;color:#fff;font-weight:bold;font-family:'Liberation Sans', sans-serif;transform:translateX(-50%) scaleX(1.0000);">2</span><div style="position:absolute;left:113px;top:161px;width:24.8px;height:24.8px;border-radius:50%;background:#1080f6;box-shadow:1px 2px 3px rgba(0,0,0,0.38);"></div><span class="t" style="left:125.4px;transform-origin:50% 50%;top:167.75px;line-height:11.5px;font-size:9.5px;color:#fff;font-weight:bold;font-family:'Liberation Sans', sans-serif;transform:translateX(-50%) scaleX(1.0000);">3</span><div style="position:absolute;left:470.7px;top:101.9px;width:24.8px;height:24.8px;border-radius:50%;background:#1080f6;box-shadow:1px 2px 3px rgba(0,0,0,0.38);"></div><span class="t" style="left:483.1px;transform-origin:50% 50%;top:108.65px;line-height:11.5px;font-size:9.5px;color:#fff;font-weight:bold;font-family:'Liberation Sans', sans-serif;transform:translateX(-50%) scaleX(1.0000);">4</span><div style="position:absolute;left:470.7px;top:194px;width:24.8px;height:24.8px;border-radius:50%;background:#1080f6;box-shadow:1px 2px 3px rgba(0,0,0,0.38);"></div><span class="t" style="left:483.1px;transform-origin:50% 50%;top:200.75px;line-height:11.5px;font-size:9.5px;color:#fff;font-weight:bold;font-family:'Liberation Sans', sans-serif;transform:translateX(-50%) scaleX(1.0000);">5</span><div style="position:absolute;left:270.6px;top:257.9px;width:24.8px;height:24.8px;border-radius:50%;background:#1080f6;box-shadow:1px 2px 3px rgba(0,0,0,0.38);"></div><span class="t" style="left:283px;transform-origin:50% 50%;top:264.65px;line-height:11.5px;font-size:9.5px;color:#fff;font-weight:bold;font-family:'Liberation Sans', sans-serif;transform:translateX(-50%) scaleX(1.0000);">6</span><div style="position:absolute;left:366.7px;top:257.9px;width:24.8px;height:24.8px;border-radius:50%;background:#1080f6;box-shadow:1px 2px 3px rgba(0,0,0,0.38);"></div><span class="t" style="left:379.1px;transform-origin:50% 50%;top:264.65px;line-height:11.5px;font-size:9.5px;color:#fff;font-weight:bold;font-family:'Liberation Sans', sans-serif;transform:translateX(-50%) scaleX(1.0000);">7</span><span class="t" style="left:4.5px;transform-origin:0 50%;top:299.7px;line-height:12px;font-size:10px;color:#2a2a2a;font-weight:normal;font-family:'Liberation Sans', sans-serif;letter-spacing:0.464px;">This sample help project introduces the basic tasks to help you learn how to use HelpSmith.</span><svg style="left:403.5px;top:310.1px" width="48" height="3"><path d="M0 2 L2 0.5 L4 2 L6 0.5 L8 2 L10 0.5 L12 2 L14 0.5 L16 2 L18 0.5 L20 2 L22 0.5 L24 2 L26 0.5 L28 2 L30 0.5 L32 2 L34 0.5 L36 2 L38 0.5 L40 2 L42 0.5 L44 2 L46 0.5" stroke="#e03030" stroke-width="0.7" fill="none"/></svg><div style="position:absolute;left:4.5px;top:310.7px;width:519.3px;height:0px;border-top:1px dotted #d4d4d4;"></div><div style="position:absolute;left:45px;top:331.3px;width:478.8px;height:0px;border-top:1px solid #949494;"></div><div style="position:absolute;left:4.5px;top:353.7px;width:519.3px;height:0px;border-top:1px solid #d8d8d8;"></div><div style="position:absolute;left:4.5px;top:374.9px;width:519.3px;height:0px;border-top:1px dotted #cccccc;"></div><div style="position:absolute;left:45px;top:396.7px;width:478.8px;height:0px;border-top:1px solid #949494;"></div><div style="position:absolute;left:4.5px;top:310.7px;width:0px;height:100px;border-left:1px solid #d8d8d8;"></div><div style="position:absolute;left:44.5px;top:310.7px;width:0px;height:100px;border-left:1px solid #d8d8d8;"></div><div style="position:absolute;left:523.8px;top:310.7px;width:0px;height:100px;border-left:1px solid #d8d8d8;"></div><span class="t" style="left:47.5px;transform-origin:0 50%;top:314.6px;line-height:15px;font-size:13px;color:#000;font-weight:bold;font-family:'Liberation Sans', sans-serif;transform:scaleX(0.9631);-webkit-text-stroke:0.25px #000;">Set Non-scrolling Area by last selected paragraph Check</span><div style="position:absolute;left:384.8px;top:315px;width:1px;height:14px;background:#111;"></div><span class="t" style="left:47.5px;transform-origin:0 50%;top:335.6px;line-height:11px;font-size:9px;color:#222;font-weight:normal;font-family:'Liberation Sans', sans-serif;letter-spacing:0.265px;">Write description here...</span><div style="position:absolute;left:47.5px;top:357px;width:196.5px;height:14.3px;background:#f0f0f0;"></div><div style="position:absolute;left:50.5px;top:359.5px;width:8.5px;height:8.5px;background:#fafafa;border:1px solid #c9c9c9;box-sizing:border-box;"></div><svg style="left:51.3px;top:360.8px" width="7" height="6"><path d="M0.8 3L2.6 5L6.2 0.8" stroke="#b0b0b0" stroke-width="1" fill="none"/></svg><span class="t" style="left:61px;transform-origin:0 50%;top:358.95px;line-height:10.5px;font-size:8.5px;color:#8b8b8b;font-weight:normal;font-family:'Liberation Sans', sans-serif;transform:scaleX(0.9296);">Set Non-scrolling Area by last selected paragraph</span><span class="t" style="left:47.5px;transform-origin:0 50%;top:379.6px;line-height:15px;font-size:13px;color:#000;font-weight:bold;font-family:'Liberation Sans', sans-serif;transform:scaleX(0.9431);-webkit-text-stroke:0.25px #000;">Show Border Check</span><span class="t" style="left:47.5px;transform-origin:0 50%;top:400px;line-height:11px;font-size:9px;color:#222;font-weight:normal;font-family:'Liberation Sans', sans-serif;letter-spacing:0.265px;">Write description here...</span><div style="position:absolute;left:11.6px;top:320.1px;width:24.8px;height:24.8px;border-radius:50%;background:#1080f6;box-shadow:1px 2px 3px rgba(0,0,0,0.38);"></div><span class="t" style="left:24px;transform-origin:50% 50%;top:326.85px;line-height:11.5px;font-size:9.5px;color:#fff;font-weight:bold;font-family:'Liberation Sans', sans-serif;transform:translateX(-50%) scaleX(1.0000);">1</span><div style="position:absolute;left:11.6px;top:384.1px;width:24.8px;height:24.8px;border-radius:50%;background:#1080f6;box-shadow:1px 2px 3px rgba(0,0,0,0.38);"></div><span class="t" style="left:24px;transform-origin:50% 50%;top:390.85px;line-height:11.5px;font-size:9.5px;color:#fff;font-weight:bold;font-family:'Liberation Sans', sans-serif;transform:translateX(-50%) scaleX(1.0000);">2</span></div><div style="position:absolute;left:763px;top:155.5px;width:12px;height:421px;background:#f0f0f0;"></div><div style="position:absolute;left:763.3px;top:168px;width:10.9px;height:116.6px;background:#cdcdcd;"></div><svg style="left:766px;top:160px" width="6" height="5"><path d="M0.6 3.8L3 1.2L5.4 3.8" stroke="#505050" stroke-width="1.2" fill="none"/></svg><svg style="left:766px;top:518.2px" width="6" height="5"><path d="M0.6 0.9L3 3.5L5.4 0.9" stroke="#505050" stroke-width="1.2" fill="none"/></svg><svg style="left:766.4px;top:530.5px" width="5" height="5"><path d="M2.5 0.2L4.4 2.5H0.6Z" fill="#555"/><path d="M0.8 3.7H4.2" stroke="#555" stroke-width="0.9"/></svg><svg style="left:766.2px;top:542.4px" width="5" height="5"><rect x="0.7" y="0.7" width="3.6" height="3.6" rx="0.8" fill="#d8d8d8" stroke="#777" stroke-width="0.8"/></svg><svg style="left:766.4px;top:555px" width="5" height="5"><path d="M2.5 4.8L4.4 2.5H0.6Z" fill="#555"/><path d="M0.8 1.3H4.2" stroke="#555" stroke-width="0.9"/></svg><div style="position:absolute;left:233px;top:563.5px;width:530px;height:13px;background:#f0f0f0;"></div><div style="position:absolute;left:246px;top:564.5px;width:469px;height:11px;background:#cdcdcd;"></div><svg style="left:236.5px;top:566.5px" width="5" height="7"><path d="M4.2 0.6L1.1 3.5L4.2 6.4" stroke="#555" stroke-width="1.2" fill="none"/></svg><svg style="left:753.5px;top:566.5px" width="5" height="7"><path d="M0.8 0.6L3.9 3.5L0.8 6.4" stroke="#555" stroke-width="1.2" fill="none"/></svg><div style="position:absolute;left:775px;top:103px;width:20px;height:474px;background:#f4f4f4;border-left:1px solid #ececec;box-sizing:border-box;"></div><span class="tv" style="position:absolute;white-space:nowrap;left:787.8px;top:135.3px;font-size:8.5px;line-height:10px;color:#444;transform:translate(-50%,-50%) rotate(90deg) scaleX(0.92);">Styles</span><svg style="left:781px;top:106px" width="13" height="14" viewBox="0 0 13 14"><text x="0" y="9" font-size="10" font-weight="bold" font-family="Liberation Sans,sans-serif" fill="#8a3fb0">A</text><text x="5" y="13" font-size="10" font-weight="bold" font-family="Liberation Sans,sans-serif" fill="#2f7fd6">A</text></svg><svg style="left:782px;top:187px" width="12" height="13" viewBox="0 0 12 13"><path d="M0.5 0.5H6.5L9 3V11.5H0.5Z" fill="#f4f4f4" stroke="#aaa"/><circle cx="8.5" cy="8.5" r="3" fill="#f0a43a"/></svg><svg style="left:781.3px;top:206px" width="13" height="9" viewBox="0 0 13 9"><path d="M5 0.9L1.6 4.4L5 7.9M8 0.9L11.4 4.4L8 7.9" fill="none" stroke="#2f8fe0" stroke-width="2.2"/></svg><div style="position:absolute;left:0px;top:577px;width:795px;height:10px;background:#f1f1f1;"></div><span class="t" style="left:2px;transform-origin:0 50%;top:583.5px;line-height:11px;font-size:9px;color:#555;font-weight:normal;font-family:'Liberation Sans', sans-serif;transform:scaleX(0.8904);">Ln 2 Col 56</span><span class="t" style="left:70.5px;transform-origin:0 50%;top:583.5px;line-height:11px;font-size:9px;color:#555;font-weight:normal;font-family:'Liberation Sans', sans-serif;transform:scaleX(0.8815);">Modified</span><span class="t" style="left:170px;transform-origin:0 50%;top:582.15px;line-height:11.5px;font-size:9.5px;color:#444;font-weight:normal;font-family:'Liberation Sans', sans-serif;transform:scaleX(0.8953);">English (United States)</span><span class="t" style="left:283.5px;transform-origin:0 50%;top:583.5px;line-height:11px;font-size:9px;color:#555;font-weight:normal;font-family:'Liberation Sans', sans-serif;transform:scaleX(0.8747);">18 item(s)</span><svg style="left:6px;top:37.7px" width="20" height="20" viewBox="0 0 20 20"><rect x="0.5" y="0.5" width="19" height="19" rx="1" fill="#fff" stroke="#8ea5c8"/><rect x="2.3" y="2.3" width="15.4" height="9" fill="#8fcdf0"/><rect x="2.3" y="11" width="15.4" height="4.2" fill="#7fb83e"/><circle cx="6.2" cy="5.8" r="2" fill="#f3c24a"/><circle cx="12.4" cy="8.2" r="2.7" fill="#5f9a2f"/><rect x="11.9" y="9.5" width="1.1" height="3.4" fill="#7a5a2a"/></svg><svg style="left:44.2px;top:37.7px" width="18" height="21.4" viewBox="0 0 18 21.4"><rect x="0" y="0" width="17.8" height="21.2" rx="1" fill="#5b6068"/><rect x="3.6" y="1.6" width="10.6" height="8.4" fill="#3f9aea"/><rect x="3.6" y="11.2" width="10.6" height="8.4" fill="#3f9aea"/><path d="M3.6 6L14.2 3V1.6H3.6Z" fill="#7cc0f5" opacity="0.7"/><path d="M3.6 15.6L14.2 12.6V11.2H3.6Z" fill="#7cc0f5" opacity="0.7"/><rect x="1" y="1.5" width="1.5" height="1.6" fill="#9aa0a8"/><rect x="15.3" y="1.5" width="1.5" height="1.6" fill="#9aa0a8"/><rect x="1" y="4.6" width="1.5" height="1.6" fill="#9aa0a8"/><rect x="15.3" y="4.6" width="1.5" height="1.6" fill="#9aa0a8"/><rect x="1" y="7.7" width="1.5" height="1.6" fill="#9aa0a8"/><rect x="15.3" y="7.7" width="1.5" height="1.6" fill="#9aa0a8"/><rect x="1" y="10.8" width="1.5" height="1.6" fill="#9aa0a8"/><rect x="15.3" y="10.8" width="1.5" height="1.6" fill="#9aa0a8"/><rect x="1" y="13.9" width="1.5" height="1.6" fill="#9aa0a8"/><rect x="15.3" y="13.9" width="1.5" height="1.6" fill="#9aa0a8"/><rect x="1" y="17" width="1.5" height="1.6" fill="#9aa0a8"/><rect x="15.3" y="17" width="1.5" height="1.6" fill="#9aa0a8"/><rect x="1" y="20.1" width="1.5" height="1.6" fill="#9aa0a8"/><rect x="15.3" y="20.1" width="1.5" height="1.6" fill="#9aa0a8"/></svg><svg style="left:90.3px;top:37.7px" width="21" height="20.5" viewBox="0 0 21 20.5"><defs><linearGradient id="gm" x1="0" y1="0" x2="0.6" y2="1"><stop offset="0" stop-color="#e2322a"/><stop offset="0.6" stop-color="#ee5a26"/><stop offset="1" stop-color="#f59a2c"/></linearGradient></defs><rect x="0.5" y="0.5" width="20" height="19.5" rx="1" fill="#fff" stroke="#94abc9"/><rect x="2.6" y="2.4" width="15.8" height="13.6" fill="url(#gm)"/><path d="M2.6 12C8 8 13 9.5 18.4 6.5V16H2.6Z" fill="#f7a72a" opacity="0.55"/></svg><svg style="left:146px;top:38px" width="23" height="21.5" viewBox="0 0 23 21.5"><defs><linearGradient id="gw" x1="0" y1="0" x2="0" y2="1"><stop offset="0" stop-color="#e9eff5"/><stop offset="1" stop-color="#ffffff"/></linearGradient></defs><rect x="0.6" y="0.6" width="21" height="19.5" rx="1.5" fill="url(#gw)" stroke="#5aa2dc" stroke-width="1.2"/><rect x="1.2" y="1.2" width="19.8" height="2.8" fill="#4c9fe3"/><rect x="9" y="11" width="13.5" height="10" rx="1" fill="#a9adb2"/><rect x="11" y="9.8" width="3" height="1.6" fill="#a9adb2"/><rect x="17" y="9.8" width="3.5" height="1.6" fill="#a9adb2"/><rect x="9" y="11" width="4" height="10" fill="#c6c9cd"/><circle cx="17" cy="16.2" r="3.3" fill="#6da7e6" stroke="#8f949a" stroke-width="0.8"/></svg><svg style="left:197px;top:38px" width="21.2" height="20.6" viewBox="0 0 21.2 20.6"><rect x="0.6" y="0.6" width="20" height="19.4" fill="#eef7fd" stroke="#5f9dd0" stroke-width="1.2"/><rect x="1.2" y="1.2" width="18.8" height="3.4" fill="#c9dfa8"/><rect x="1.2" y="4.5" width="18.8" height="0.9" fill="#9fcbe8"/><rect x="1.2" y="8.4" width="18.8" height="0.9" fill="#9fcbe8"/><rect x="1.2" y="12.3" width="18.8" height="0.9" fill="#9fcbe8"/><rect x="1.2" y="16.2" width="18.8" height="0.9" fill="#9fcbe8"/><rect x="5.4" y="1.2" width="0.9" height="18.2" fill="#9fcbe8"/><rect x="10.4" y="1.2" width="0.9" height="18.2" fill="#9fcbe8"/><rect x="15.4" y="1.2" width="0.9" height="18.2" fill="#9fcbe8"/><rect x="5.9" y="5" width="4.1" height="14.5" fill="#fbfbe8" opacity="0.6"/></svg><svg style="left:235px;top:37.3px" width="22.5" height="22.7" viewBox="0 0 22.5 22.7"><rect x="6.5" y="0.5" width="15.5" height="9.5" fill="#fdfdfd" stroke="#c9c9c9"/><rect x="6.5" y="12.5" width="15.5" height="9.5" fill="#fdfdfd" stroke="#c9c9c9"/><path d="M0.3 7.6L5.3 11.2L0.3 14.8Z" fill="#5b9bd8" stroke="#3f7fbf" stroke-width="0.6"/><path d="M9 3H20" stroke="#7d7d7d" stroke-width="0.9" stroke-dasharray="1.6 0.8"/><path d="M9 5.2H20" stroke="#7d7d7d" stroke-width="0.9" stroke-dasharray="1.6 0.8"/><path d="M9 15.2H20" stroke="#7d7d7d" stroke-width="0.9" stroke-dasharray="1.6 0.8"/><path d="M9 17.4H20" stroke="#7d7d7d" stroke-width="0.9" stroke-dasharray="1.6 0.8"/></svg><svg style="left:280.3px;top:37.3px" width="18.2" height="22.3" viewBox="0 0 18.2 22.3"><path d="M0.5 0.5H14L17.5 4V21.7H0.5Z" fill="#fcfcfc" stroke="#c2c2c2"/><path d="M14 0.5V4H17.5" fill="#e9e9e9" stroke="#c2c2c2" stroke-width="0.8"/><path d="M2.8 3.2H12.5" stroke="#9a9a9a" stroke-width="0.9" stroke-dasharray="2.2 0.7"/><path d="M2.8 5.8H15.2" stroke="#9a9a9a" stroke-width="0.9" stroke-dasharray="2.2 0.7"/><path d="M2.8 8.4H15.2" stroke="#9a9a9a" stroke-width="0.9" stroke-dasharray="2.2 0.7"/><path d="M2.8 10.6H15.2" stroke="#9a9a9a" stroke-width="0.9" stroke-dasharray="2.2 0.7"/><path d="M2.8 15.6H15.2" stroke="#9a9a9a" stroke-width="0.9" stroke-dasharray="2.2 0.7"/><path d="M2.8 18.2H15.2" stroke="#9a9a9a" stroke-width="0.9" stroke-dasharray="2.2 0.7"/><rect x="2" y="12.3" width="14.2" height="1.5" fill="#222"/></svg><svg style="left:335px;top:37.3px" width="23" height="22.5" viewBox="0 0 23 22.5"><defs><radialGradient id="gg" cx="0.35" cy="0.3" r="0.8"><stop offset="0" stop-color="#56b4f2"/><stop offset="1" stop-color="#1f78cc"/></radialGradient></defs><circle cx="10.5" cy="10.3" r="10" fill="url(#gg)" stroke="#2a6fb8" stroke-width="0.6"/><path d="M7.5 2.5C10 1.3 13.5 2 14.5 4C13.8 6.5 12.3 7 12.6 9.5C12.9 12 11.8 14.8 10.3 15.2C8.6 13.8 9 11.5 7.5 10C6 8.5 5.8 5 7.5 2.5Z" fill="#7fd829"/><path d="M15.5 7C17.5 7.2 19 9.5 18.6 12C17.3 13 15.6 12.5 15.2 10.5Z" fill="#6fc92a" opacity="0.9"/><rect x="4" y="16" width="9" height="5.4" rx="2.6" fill="none" stroke="#6f757c" stroke-width="1.7"/><rect x="12.5" y="16" width="9" height="5.4" rx="2.6" fill="none" stroke="#6f757c" stroke-width="1.7"/><rect x="9" y="17.9" width="8" height="1.6" fill="#b9bec4"/></svg><svg style="left:385px;top:36px" width="24" height="24" viewBox="0 0 24 24"><path d="M17.6 1L23.2 7.3L7 23.2L5.5 18.6L0.7 17Z" fill="#e8402f"/><path d="M17.6 1L23.2 7.3L21.5 9L16 2.6Z" fill="#f2695a" opacity="0.6"/></svg><svg style="left:444px;top:39px" width="21" height="19" viewBox="0 0 21 19"><text x="0.3" y="17.6" font-size="24" font-weight="bold" font-family="Liberation Sans,sans-serif" fill="#86beee" stroke="#4f96d8" stroke-width="0.9" textLength="20" lengthAdjust="spacingAndGlyphs">IF</text></svg><svg style="left:495px;top:41px" width="21.5" height="14.8" viewBox="0 0 21.5 14.8"><rect x="0.3" y="0.3" width="20.8" height="14.2" rx="1.8" fill="#3c84d2" stroke="#2f6fb8" stroke-width="0.6"/><text x="10.7" y="9.9" font-size="6.8" font-weight="bold" font-family="Liberation Sans,sans-serif" fill="#fff" text-anchor="middle" textLength="16.5" lengthAdjust="spacingAndGlyphs">HTML</text></svg><svg style="left:539.5px;top:37px" width="21" height="23" viewBox="0 0 21 23"><defs><linearGradient id="gp" x1="0" y1="0" x2="0" y2="1"><stop offset="0" stop-color="#ffffff"/><stop offset="1" stop-color="#ebebeb"/></linearGradient></defs><path d="M0.5 0.5H12.5L16.5 4.5V20.5H0.5Z" fill="url(#gp)" stroke="#cfcfcf"/><path d="M12.5 0.5V4.5H16.5" fill="#ececec" stroke="#cfcfcf" stroke-width="0.8"/><rect x="10" y="12" width="10.5" height="10.5" fill="#3e94e4" stroke="#2f7fd0" stroke-width="0.6"/><text x="15.25" y="20.6" font-size="9.5" font-family="Liberation Serif,serif" fill="#fff" text-anchor="middle">T</text></svg><svg style="left:585.5px;top:37.5px" width="19" height="21" viewBox="0 0 19 21"><path d="M0.5 0.5H13.5L17.7 4.7V20.3H0.5Z" fill="#fbfbfb" stroke="#c6c6c6"/><path d="M13.5 0.5V4.7H17.7" fill="#e6e6e6" stroke="#c6c6c6" stroke-width="0.8"/><text x="9" y="14.4" font-size="10.5" font-weight="bold" font-family="Liberation Sans,sans-serif" fill="#6a6a6a" text-anchor="middle">{}</text></svg><svg style="left:620px;top:36.2px" width="12" height="12" viewBox="0 0 12 12"><path d="M1 0.7H8.3A0.8 0.8 0 0 1 9 1.5V6.5H3.3L1.4 8.3V6.5H1A0.6 0.6 0 0 1 0.5 5.9V1.3Z" fill="#fdf3e2" stroke="#e9a24a" stroke-width="0.9"/><path d="M4.3 4.3H10.9A0.8 0.8 0 0 1 11.6 5V9.2H7.2L5.2 11.3V9.2H4.3Z" fill="#cfe6fa" stroke="#4e9be0" stroke-width="0.9" transform="rotate(8 8 8)"/></svg><svg style="left:620.6px;top:53.6px" width="10" height="12" viewBox="0 0 10 12"><rect x="0.6" y="0.6" width="8.6" height="10.6" rx="0.8" fill="#dcae68" stroke="#b88a45" stroke-width="1"/><rect x="1.6" y="1.6" width="6.6" height="1.2" fill="#e9c78f"/></svg><svg style="left:620px;top:71.4px" width="12" height="11.5" viewBox="0 0 12 11.5"><rect x="5" y="0" width="1.6" height="11.4" fill="#c9853a"/><path d="M1.4 1.3H9.3L10.9 2.9L9.3 4.5H1.4Z" fill="#f2a64c" stroke="#d98a2e" stroke-width="0.6"/><path d="M10.4 5.6H2.6L1 7.2L2.6 8.8H10.4Z" fill="#f2a64c" stroke="#d98a2e" stroke-width="0.6"/></svg><svg style="left:721px;top:38px" width="23" height="22" viewBox="0 0 23 22"><defs><linearGradient id="go" x1="0" y1="0" x2="0" y2="1"><stop offset="0" stop-color="#3f86d6"/><stop offset="1" stop-color="#1f5cad"/></linearGradient></defs><text x="11.2" y="20.3" font-size="29" font-weight="bold" font-family="Liberation Serif,serif" fill="url(#go)" text-anchor="middle" textLength="21.5" lengthAdjust="spacingAndGlyphs">&#937;</text></svg><svg style="left:782px;top:91.5px" width="7" height="5"><path d="M0.6 4.2L3.5 1.1L6.4 4.2" stroke="#555" stroke-width="1.3" fill="none"/></svg><div style="position:absolute;left:1px;top:62px;width:30px;height:1px;background:#e3e3e3;"></div><div style="position:absolute;left:40px;top:62px;width:27px;height:1px;background:#e3e3e3;"></div><svg style="left:515px;top:79.3px" width="5" height="3"><path d="M0 0h5L2.5 3z" fill="#777"/></svg><svg style="left:563.3px;top:79.3px" width="5" height="3"><path d="M0 0h5L2.5 3z" fill="#777"/></svg><svg style="left:0.5px;top:-6px" width="11" height="12" viewBox="0 0 11 12"><path d="M5.5 0L10.5 3V8.5L5.5 11.5L0.5 8.5V3Z" fill="#f5a623"/><path d="M5.5 3L8 5V8.5L5.5 10.5L3 8.5V5Z" fill="#ffd977"/><circle cx="5.5" cy="9.5" r="1.8" fill="#e9731c"/></svg><svg style="left:21px;top:-5px" width="10" height="10.5" viewBox="0 0 10 10.5"><rect x="0" y="0" width="10" height="10" rx="1" fill="#5aa7ee"/><rect x="2" y="5" width="6" height="5" fill="#eaf4fd"/><rect x="3.2" y="6.4" width="1.8" height="3.6" fill="#3f86d2"/></svg><svg style="left:38.5px;top:-5.5px" width="10" height="10.5" viewBox="0 0 10 10.5"><circle cx="5" cy="5" r="5" fill="#ef6b2d"/><path d="M2.5 5.5L5 8L7.5 5.5Z" fill="#fff"/><rect x="4" y="2" width="2" height="4" fill="#fff"/></svg><svg style="left:67.5px;top:-5.5px" width="10" height="10.5" viewBox="0 0 10 10.5"><circle cx="5" cy="5" r="5" fill="#5073ab"/></svg><svg style="left:85.5px;top:-2px" width="3" height="3" viewBox="0 0 3 3"><circle cx="1.5" cy="1.5" r="1.3" fill="#5d7fb5"/></svg><svg style="left:100.5px;top:-1px" width="5" height="4" viewBox="0 0 5 4"><path d="M0.3 0H4.7L2.5 3Z" fill="#e8eef8"/></svg><svg style="left:673.7px;top:-3px" width="3" height="7" viewBox="0 0 3 7"><rect x="0.7" y="0" width="1.6" height="3.2" fill="#f4f7fc"/><rect x="0.6" y="4.4" width="1.8" height="1.8" fill="#f4f7fc"/></svg><svg style="left:697.5px;top:-6px" width="11" height="10" viewBox="0 0 11 10"><rect x="0.7" y="0.7" width="9.4" height="8.3" fill="none" stroke="#f4f7fc" stroke-width="1.3"/><path d="M5.4 3V7M3.4 5.2L5.4 7.2L7.4 5.2" stroke="#f4f7fc" stroke-width="1.1" fill="none"/></svg><div style="position:absolute;left:725px;top:1px;width:7.5px;height:1.6px;background:#f4f7fc;"></div><svg style="left:750.5px;top:-6px" width="9" height="10" viewBox="0 0 9 10"><rect x="0.7" y="0.7" width="7.6" height="8.3" fill="none" stroke="#f4f7fc" stroke-width="1.3"/></svg><svg style="left:777.5px;top:-5px" width="8" height="9" viewBox="0 0 8 9"><path d="M0.5 0.5L7.5 8M7.5 0.5L0.5 8" stroke="#f4f7fc" stroke-width="1.4"/></svg>
</div></body></html>
